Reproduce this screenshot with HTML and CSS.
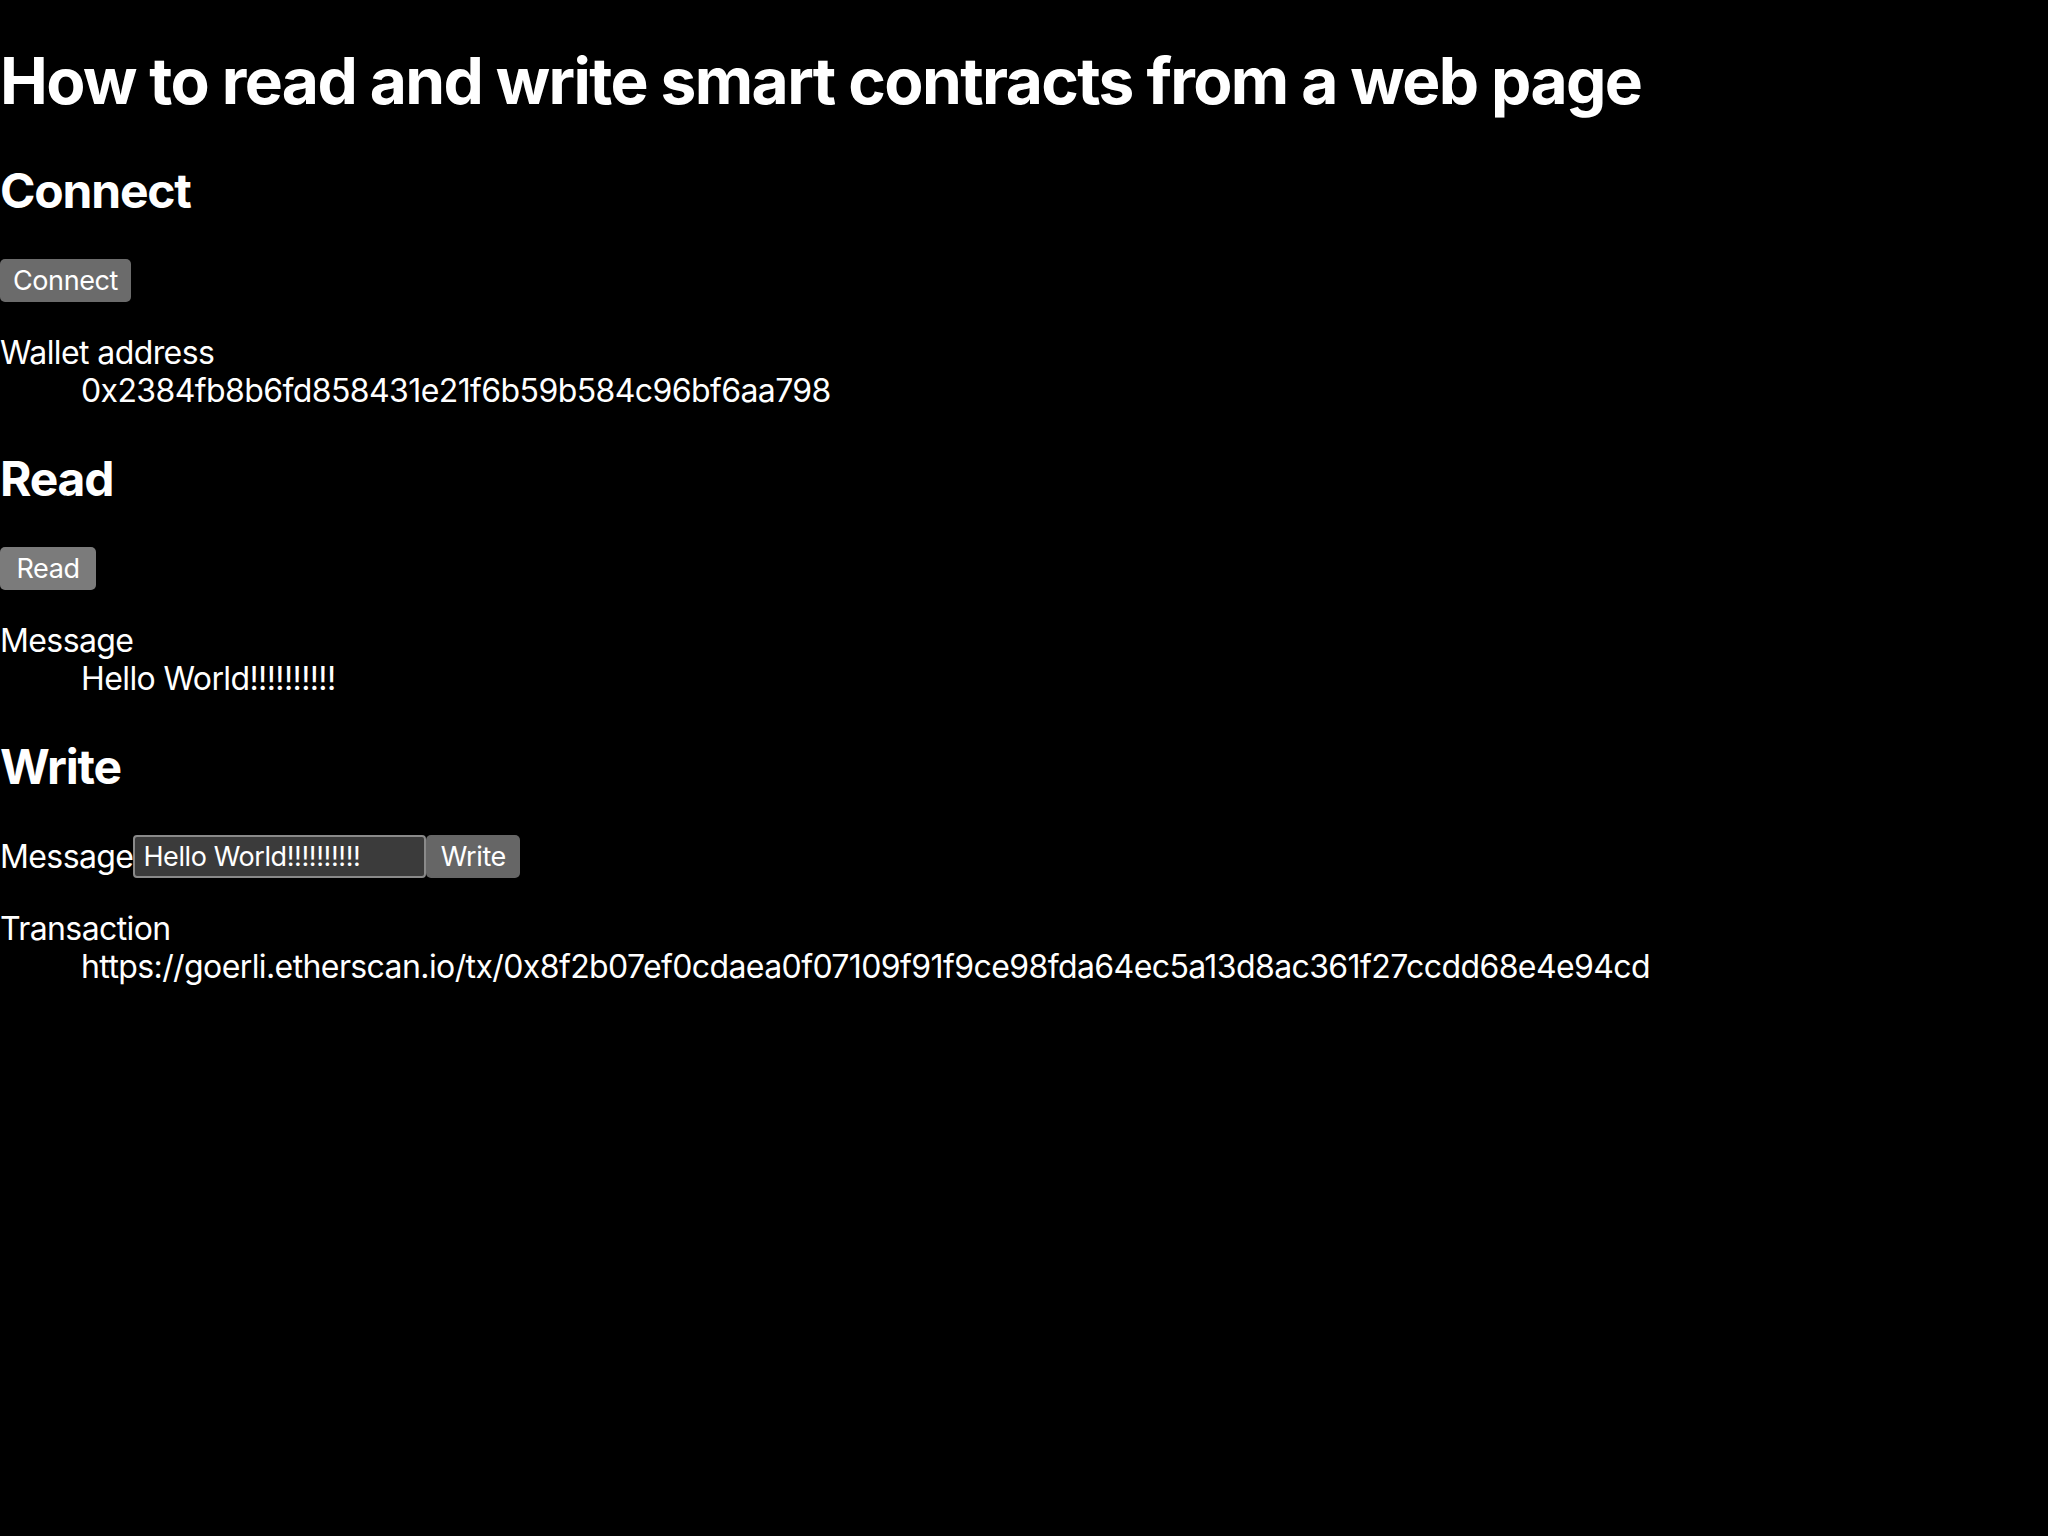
FILE: index.html
```html
<!DOCTYPE html>
<html>
<head>
<meta charset="utf-8">
<title>Smart contracts</title>
<link rel="stylesheet" href="styles.css">
</head>
<body>
<h1 class="title">How to read and write smart contracts from a web page</h1>

<h2 class="section">Connect</h2>
<button class="btn btn-connect">Connect</button>
<dl class="info">
  <dt>Wallet address</dt>
  <dd>0x2384fb8b6fd858431e21f6b59b584c96bf6aa798</dd>
</dl>

<h2 class="section">Read</h2>
<button class="btn btn-read">Read</button>
<dl class="info">
  <dt>Message</dt>
  <dd>Hello World!!!!!!!!!!</dd>
</dl>

<h2 class="section">Write</h2>
<div class="write-row">
  <label class="label" for="msg">Message</label><input id="msg" class="field" type="text" value="Hello World!!!!!!!!!!"><button class="btn btn-write">Write</button>
</div>
<dl class="info">
  <dt>Transaction</dt>
  <dd>https://goerli.etherscan.io/tx/0x8f2b07ef0cdaea0f07109f91f9ce98fda64ec5a13d8ac361f27ccdd68e4e94cd</dd>
</dl>
</body>
</html>
```

FILE: styles.css
```css
html {
  background: #000;
}
body {
  margin: 0;
  background: #000;
  color: #fff;
  font-family: Inter, "Liberation Sans", sans-serif;
  font-size: 32px;
  line-height: 38px;
  letter-spacing: -0.6px;
}
.title {
  font-size: 64px;
  line-height: 76px;
  font-weight: 700;
  margin: 43px 0;
  letter-spacing: -1.6px;
}
.section {
  font-size: 48px;
  line-height: 57px;
  font-weight: 700;
  margin: 40px 0;
  letter-spacing: -1.2px;
}
.btn {
  font-family: inherit;
  font-size: 27px;
  letter-spacing: -0.4px;
  color: #fff;
  border: none;
  border-radius: 5px;
  height: 43px;
  padding: 0 12px;
  margin: 0;
  background: #6b6b6b;
  display: inline-block;
  vertical-align: top;
}
.btn-connect {
  width: 131px;
}
.btn-read {
  width: 96px;
  background: #7b7b7b;
}
.btn-write {
  width: 94px;
  background: #666;
}
.info {
  margin: 32px 0;
}
.info dt {
  margin: 0;
}
.info dd {
  margin: 0 0 0 81px;
}
.write-row {
  display: flex;
  align-items: center;
  margin: 0;
  height: 43px;
}
.label {
  font-size: 32px;
}
.field {
  font-family: inherit;
  font-size: 27px;
  letter-spacing: -0.4px;
  color: #fff;
  background: #3b3b3b;
  border: 2px solid #8a8a8a;
  border-radius: 4px;
  width: 293px;
  height: 43px;
  box-sizing: border-box;
  padding: 0 8px;
  margin: 0;
}
```
